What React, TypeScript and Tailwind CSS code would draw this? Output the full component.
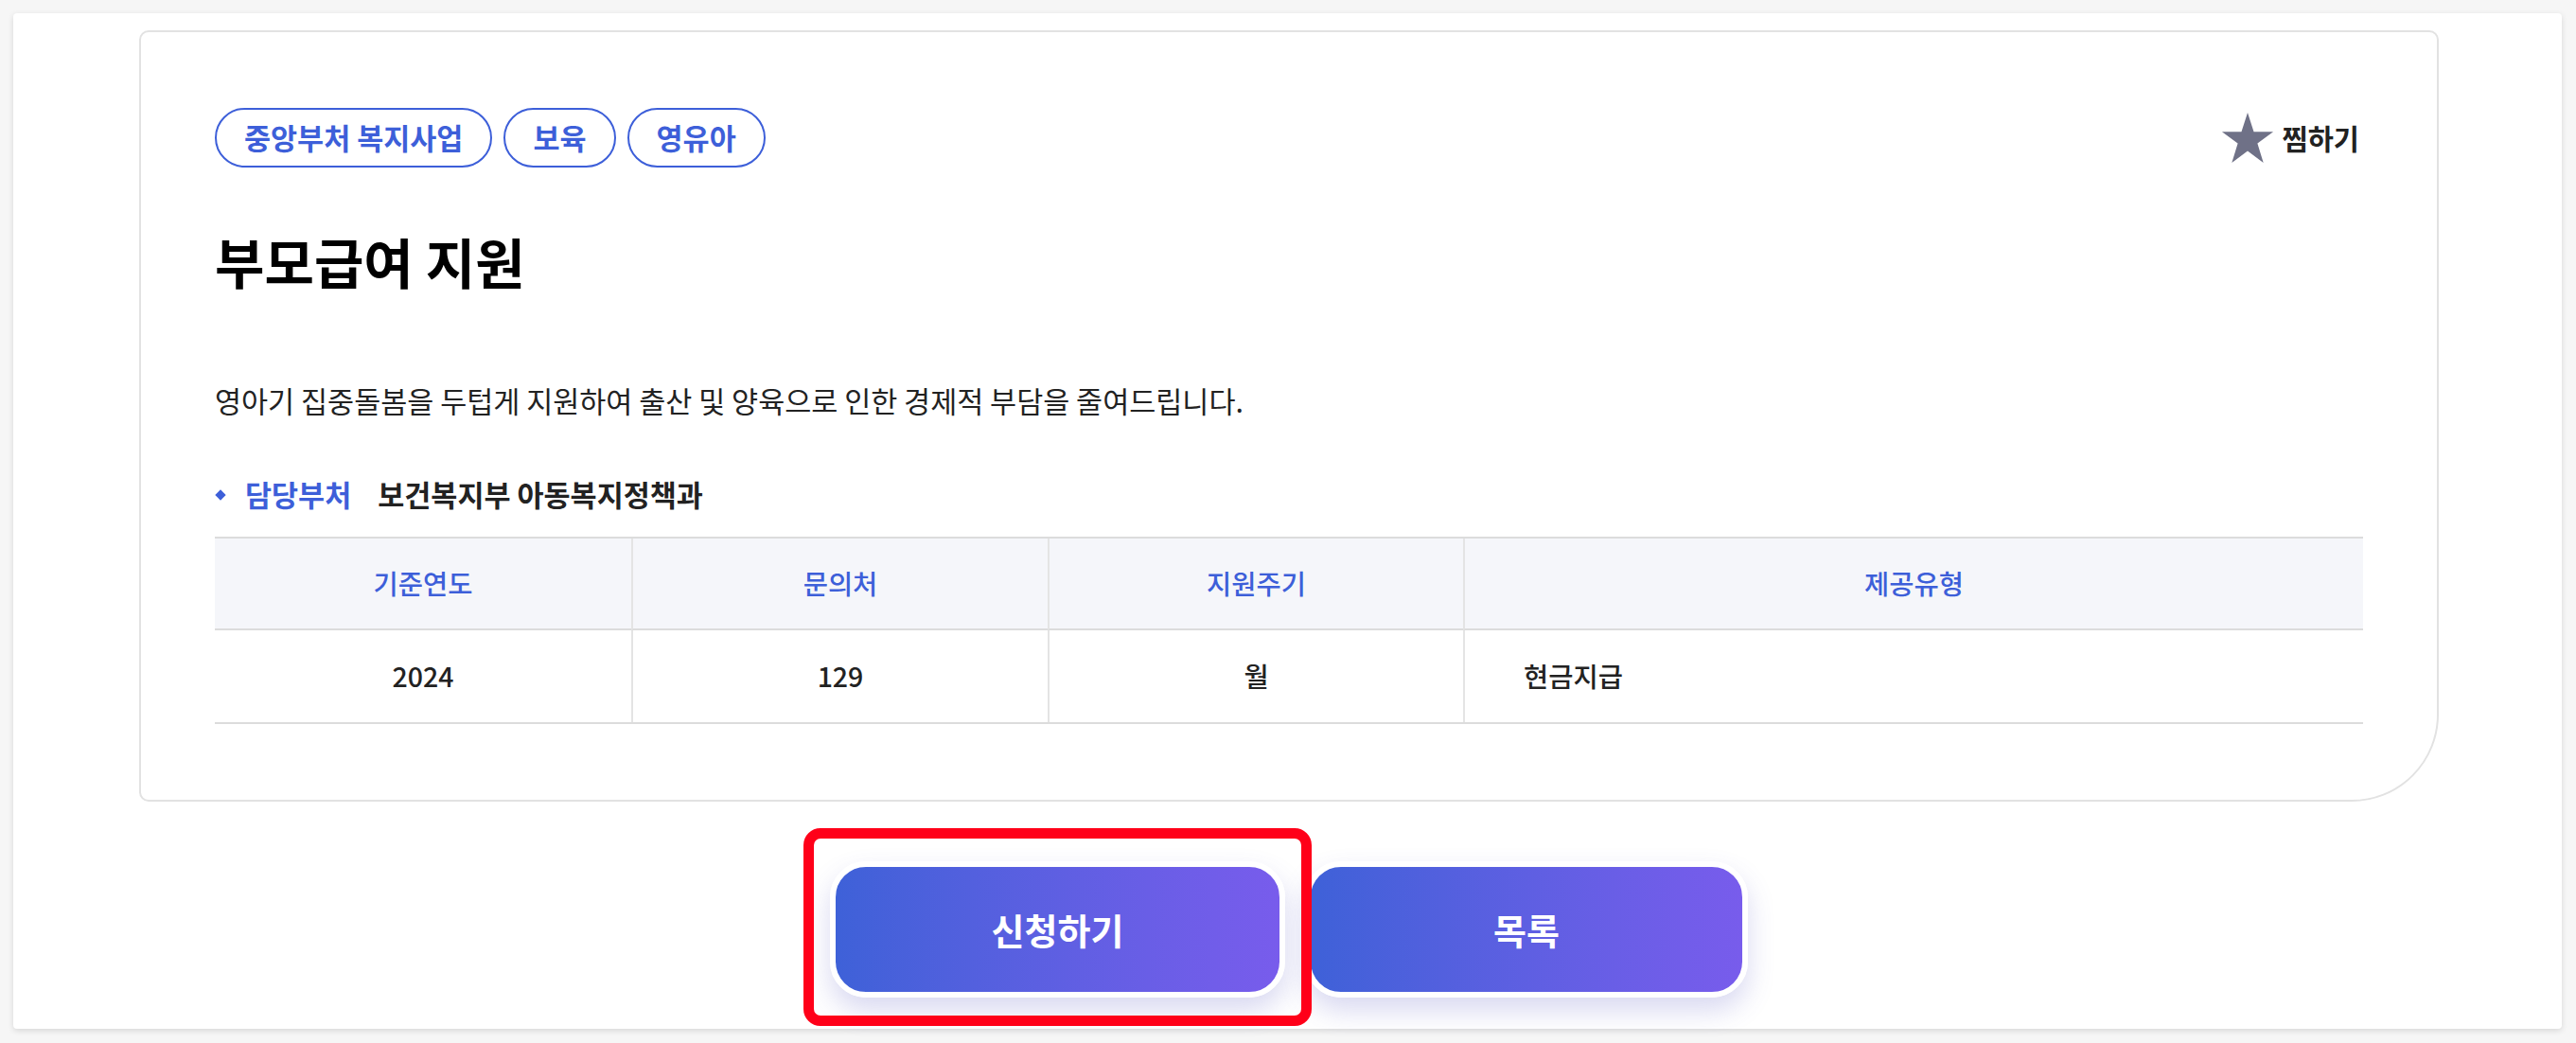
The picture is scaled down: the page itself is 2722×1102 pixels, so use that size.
import React from 'react';

const tags = ['중앙부처 복지사업', '보육', '영유아'];

const columns = [
  { head: '기준연도', value: '2024', align: 'center' },
  { head: '문의처', value: '129', align: 'center' },
  { head: '지원주기', value: '월', align: 'center' },
  { head: '제공유형', value: '현금지급', align: 'left' },
];

function StarIcon() {
  return (
    <svg viewBox="0 0 24 24" className="h-[58px] w-[58px]">
      <polygon
        points="12,0.8 14.7,9.2 23.2,9.2 16.3,14.3 18.9,22.8 12,17.6 5.1,22.8 7.7,14.3 0.8,9.2 9.3,9.2"
        fill="#6f7187"
      />
    </svg>
  );
}

export default function App() {
  return (
    <div className="min-h-screen bg-[#f6f6f6] pl-[14px] pr-[15px] pt-[14px] font-['Noto_Sans_CJK_KR','Noto_Sans',sans-serif]">
      <div className="h-[1073px] rounded-[4px] bg-white pl-[133px] pr-[130px] pt-[18px] shadow-[0_2px_6px_rgba(0,0,0,0.13)]">
        {/* Detail card */}
        <div className="rounded-[10px] rounded-br-[92px] border-2 border-[#e2e2e2] px-[78px] pb-[80px] pt-[80px]">
          <div className="flex h-[63px] items-center justify-between">
            <div className="flex gap-[12px]">
              {tags.map((tag) => (
                <span
                  key={tag}
                  className="flex h-[63px] items-center rounded-full border-2 border-[#3d5fd9] px-[29px] text-[30.5px] font-semibold text-[#3d5fd9]"
                >
                  {tag}
                </span>
              ))}
            </div>
            <button className="flex items-center gap-[8px] pr-[4px]">
              <StarIcon />
              <span className="text-[29.5px] font-semibold text-[#222]">찜하기</span>
            </button>
          </div>

          <h1 className="mt-[61px] text-[57px] font-bold leading-[1.3] text-black">부모급여 지원</h1>

          <p className="mt-[89px] text-[30.5px] leading-[1.5] text-[#222]">
            영아기 집중돌봄을 두텁게 지원하여 출산 및 양육으로 인한 경제적 부담을 줄여드립니다.
          </p>

          <div className="mt-[53px] flex items-center text-[30.5px] font-semibold leading-[1.5]">
            <span className="ml-[2px] mr-[22px] h-[8px] w-[8px] rotate-45 bg-[#3d5fd9]"></span>
            <span className="text-[#3d5fd9]">담당부처</span>
            <span className="ml-[28px] text-[#222]">보건복지부 아동복지정책과</span>
          </div>

          {/* Info table */}
          <div className="mt-[21px] grid grid-cols-[440px_440px_439px_1fr] border-y-2 border-[#dcdcdc]">
            {columns.map((col, i) => (
              <div
                key={col.head}
                className={`flex h-[97px] items-center justify-center border-b-2 border-[#dcdcdc] bg-[#f5f6fa] text-[28.5px] font-medium text-[#3d5fd9] ${i > 0 ? 'border-l-2 border-l-[#e4e4e4]' : ''}`}
              >
                {col.head}
              </div>
            ))}
            {columns.map((col, i) => (
              <div
                key={col.value}
                className={`flex h-[97px] items-center text-[28.5px] font-medium text-[#222] ${col.align === 'center' ? 'justify-center' : 'pl-[62px]'} ${i > 0 ? 'border-l-2 border-l-[#e4e4e4]' : ''}`}
              >
                {col.value}
              </div>
            ))}
          </div>
        </div>

        {/* Actions */}
        <div className="mt-[63px] flex justify-center gap-[21px]">
          <div className="relative">
            <button className="flex h-[144px] w-[481px] items-center justify-center rounded-[38px] border-[6px] border-white bg-gradient-to-r from-[#3e61d8] to-[#785cec] text-[38px] font-bold text-white shadow-[0_14px_28px_rgba(80,80,190,0.22)]">
              신청하기
            </button>
            <div className="pointer-events-none absolute left-[-28px] top-[-35px] z-10 h-[209px] w-[537px] rounded-[18px] border-[11px] border-[#ff0019]"></div>
          </div>
          <button className="flex h-[144px] w-[468px] items-center justify-center rounded-[38px] border-[6px] border-white bg-gradient-to-r from-[#3e61d8] to-[#785cec] text-[38px] font-bold text-white shadow-[0_14px_28px_rgba(80,80,190,0.22)]">
            목록
          </button>
        </div>
      </div>
    </div>
  );
}
